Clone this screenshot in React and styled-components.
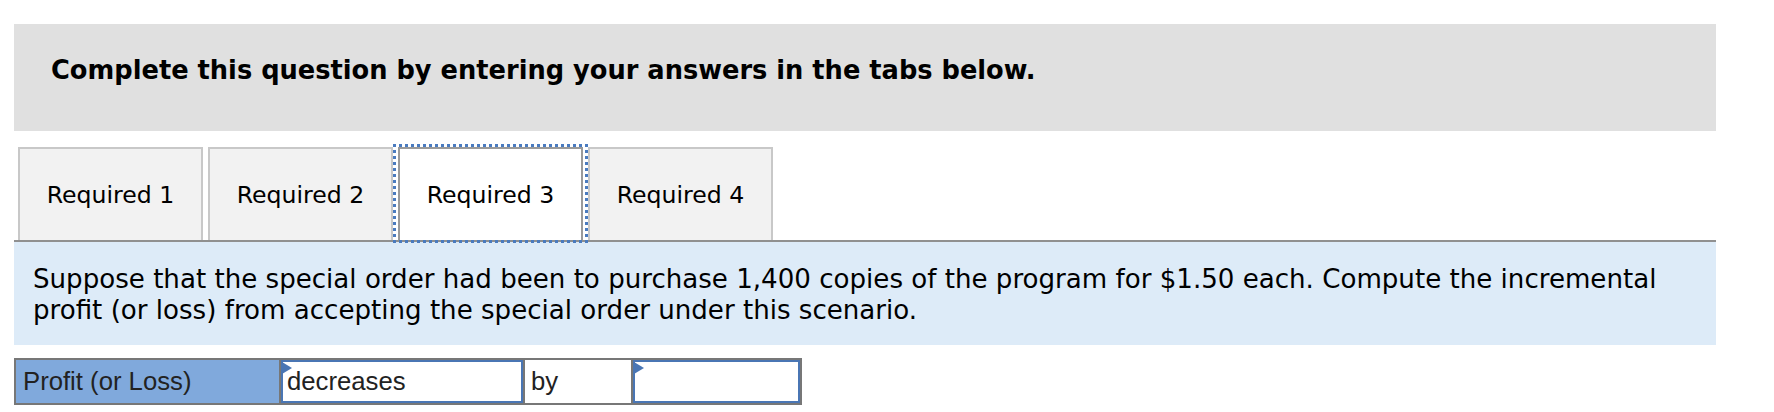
import React from "react";
import styled, { createGlobalStyle } from "styled-components";

const GlobalStyle = createGlobalStyle`
  html, body { margin: 0; padding: 0; background: #ffffff; }
  * { box-sizing: border-box; }
`;

const Page = styled.div`
  width: 1716px;
  padding: 24px 0 0 14px;
  font-family: "DejaVu Sans", Verdana, sans-serif;
  color: #000;
`;

const Banner = styled.div`
  background: #e0e0e0;
  height: 107px;
  padding: 31px 38px 0 37px;
  font-size: 25.7px;
  font-weight: bold;
  line-height: 30px;
`;

const TabList = styled.div`
  margin-top: 16px;
  display: flex;
  gap: 5px;
  padding-left: 4px;
  border-bottom: 2px solid #909090;
`;

const Tab = styled.div`
  position: relative;
  width: 185px;
  height: 93px;
  display: flex;
  align-items: center;
  justify-content: center;
  font-size: 23.6px;
  color: #000;
  border: 2px solid ${(p) => (p.$active ? "#9a9a9a" : "#c8c8c8")};
  border-bottom: none;
  background: ${(p) => (p.$active ? "#ffffff" : "#f2f2f2")};
  ${(p) =>
    p.$active &&
    `
    z-index: 1;
    &::after {
      content: "";
      position: absolute;
      left: -7px;
      right: -7px;
      top: -5px;
      bottom: -3px;
      border: 3px dotted #4a7bbf;
      pointer-events: none;
    }
  `}
`;

const Prompt = styled.div`
  background: #ddebf8;
  height: 103px;
  padding: 22px 19px 0;
  font-size: 26.1px;
  line-height: 30.5px;
`;

const AnswerRow = styled.div`
  margin-top: 13px;
  display: inline-flex;
  height: 47px;
  border: 2px solid #777777;
  font-family: "Liberation Sans", Arial, sans-serif;
  font-size: 25.7px;
  color: #222;
`;

const Cell = styled.div`
  display: flex;
  align-items: center;
  width: ${(p) => p.$w}px;
  background: ${(p) => p.$bg || "#ffffff"};
  padding-left: ${(p) => p.$pad || 0}px;
  & + & {
    border-left: 2px solid #777777;
  }
`;

const Field = styled.div`
  position: relative;
  width: 100%;
  height: 100%;
  display: flex;
  align-items: center;
  padding-left: 4px;
  border: 2px solid #4a76b4;
  background: #ffffff;
`;

const Flag = styled.span`
  position: absolute;
  top: 0;
  left: -1px;
  width: 0;
  height: 0;
  border-left: 10px solid #4a76b4;
  border-top: 6px solid transparent;
  border-bottom: 6px solid transparent;
`;

const tabs = ["Required 1", "Required 2", "Required 3", "Required 4"];

export default function App() {
  return (
    <>
      <GlobalStyle />
      <Page>
        <Banner>Complete this question by entering your answers in the tabs below.</Banner>
        <TabList>
          {tabs.map((t, i) => (
            <Tab key={t} $active={i === 2}>
              {t}
            </Tab>
          ))}
        </TabList>
        <Prompt>
          Suppose that the special order had been to purchase 1,400 copies of the program for $1.50 each. Compute the incremental
          <br />
          profit (or loss) from accepting the special order under this scenario.
        </Prompt>
        <AnswerRow>
          <Cell $w={263} $bg="#80a9dc" $pad={7}>
            Profit (or Loss)
          </Cell>
          <Cell $w={244}>
            <Field>
              <Flag />
              decreases
            </Field>
          </Cell>
          <Cell $w={108} $pad={6}>
            by
          </Cell>
          <Cell $w={169}>
            <Field>
              <Flag />
            </Field>
          </Cell>
        </AnswerRow>
      </Page>
    </>
  );
}
